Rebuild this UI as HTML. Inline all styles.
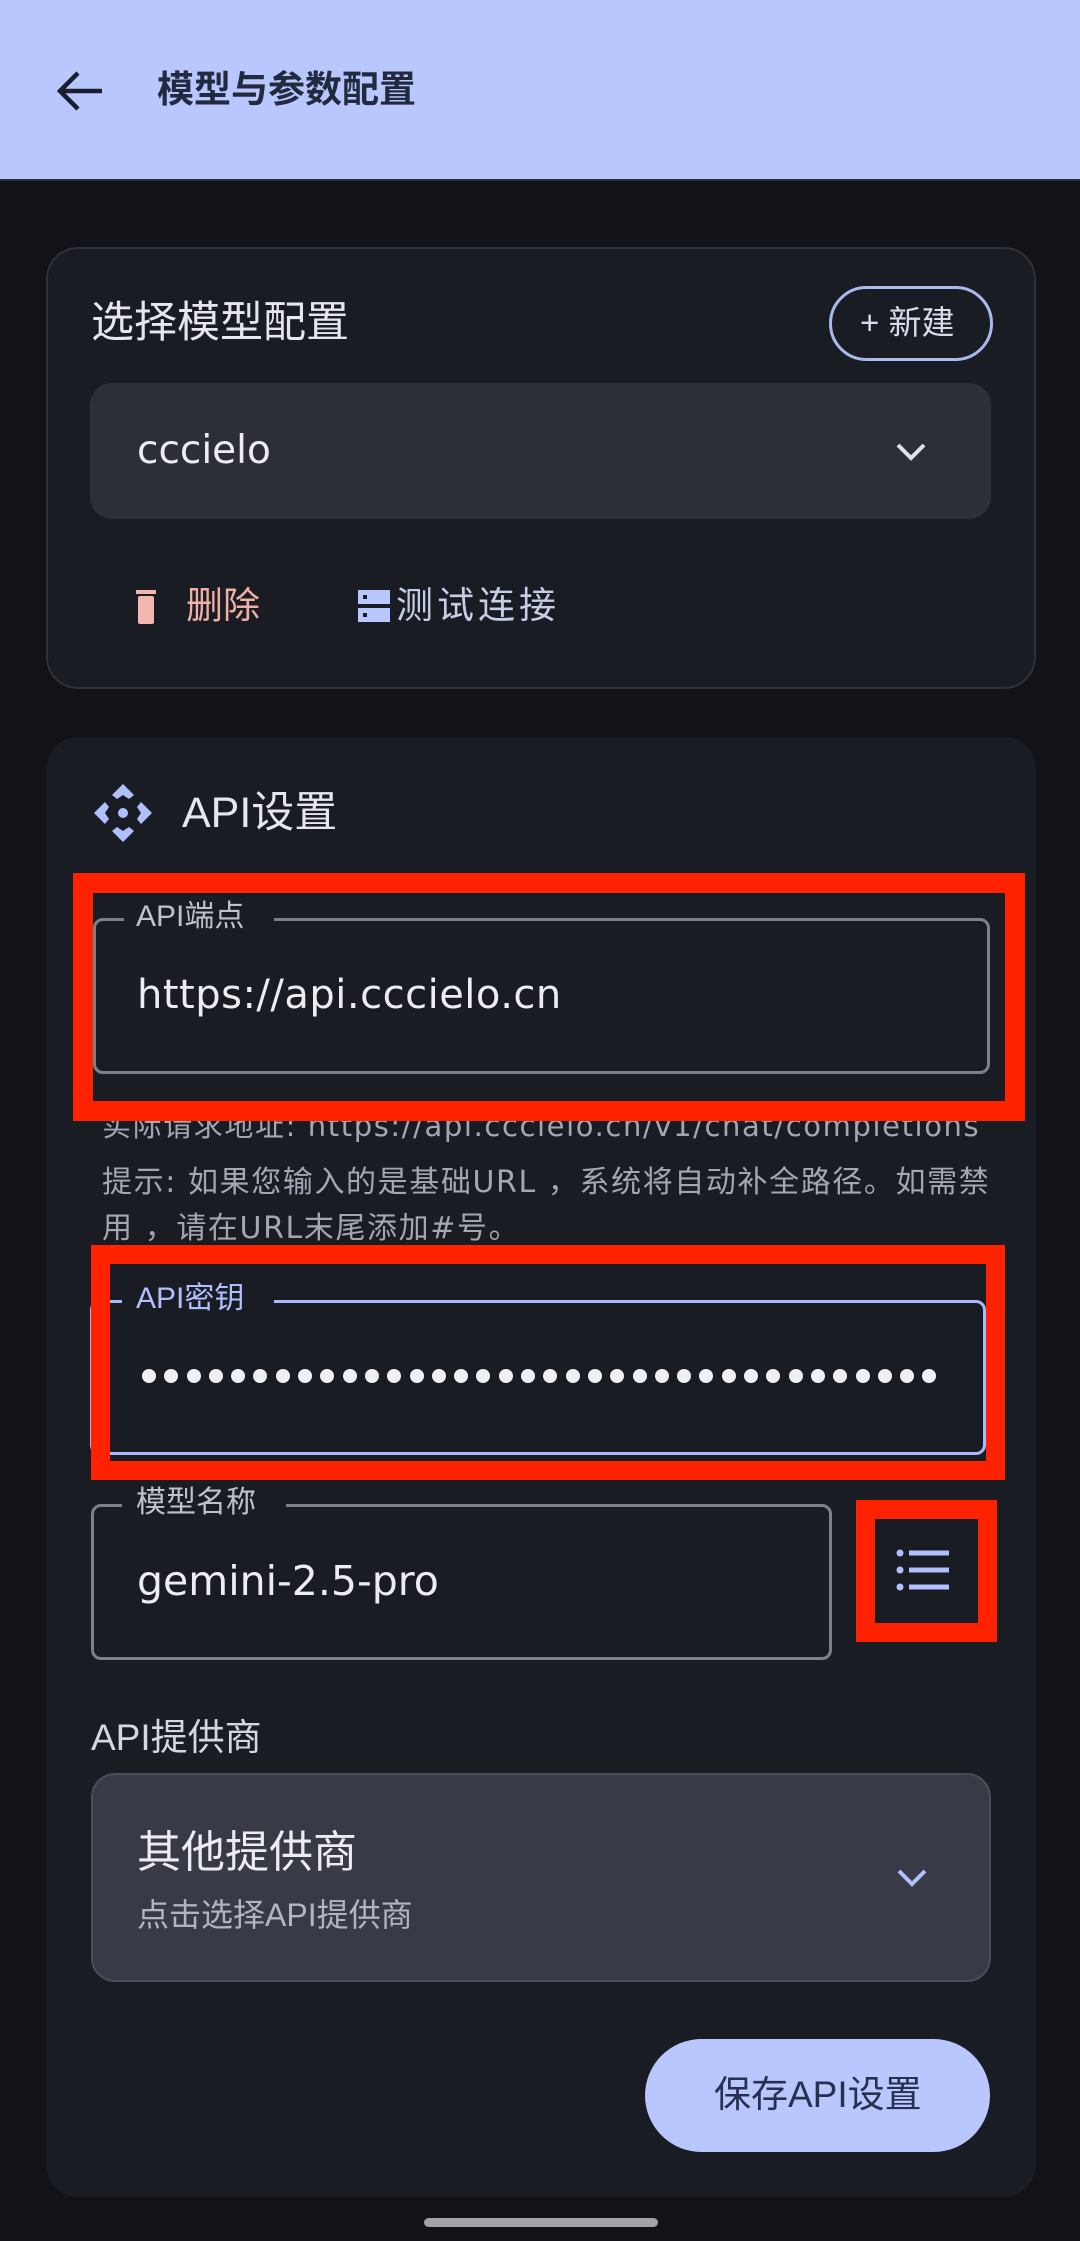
<!DOCTYPE html>
<html><head><meta charset="utf-8">
<style>
*{margin:0;padding:0;box-sizing:border-box}
body{width:1080px;height:2241px;background:#121318;position:relative;overflow:hidden;font-family:"Liberation Sans","Noto Sans CJK SC",sans-serif;color:#e3e3ea}
.a{position:absolute}
.t{position:absolute;white-space:nowrap;line-height:1}
.d{font-family:"DejaVu Sans","Noto Sans CJK SC",sans-serif}
.dots{position:absolute;left:140px;top:1367px;display:flex}
.dots i{display:block;width:22.3px;height:18px;position:relative}
.dots i:after{content:"";position:absolute;left:2px;top:2px;width:14px;height:14px;border-radius:50%;background:#f0f0f4}
</style></head><body>
<div class="a" style="left:0;top:0;width:1080px;height:179px;background:#b8c8ff"></div>
<div class="a" style="left:0;top:179px;width:1080px;height:2px;background:#2a2c33"></div>
<svg class="a" style="left:52px;top:68px" width="56" height="46" viewBox="0 0 56 46"><path d="M50 23H8M26 5L8 23l18 18" fill="none" stroke="#1a1f30" stroke-width="4.5"/></svg>
<div class="t" style="left:157px;top:71px;font-size:37px;color:#232a40;font-weight:bold">模型与参数配置</div>

<div class="a" style="left:46px;top:247px;width:990px;height:442px;background:#1a1c23;border:2px solid #2f3139;border-radius:32px"></div>
<div class="t" style="left:91px;top:302px;font-size:43px;color:#e6e6ee">选择模型配置</div>
<div class="a" style="left:829px;top:286px;width:164px;height:75px;border:3px solid #a9b9ee;border-radius:38px"></div>
<div class="t" style="left:860px;top:306px;font-size:33px;color:#d8dcea">+ 新建</div>
<div class="a" style="left:90px;top:383px;width:901px;height:136px;background:#2d2f38;border-radius:22px"></div>
<div class="t d" style="left:137px;top:431px;font-size:39px;color:#ececf2">cccielo</div>
<svg class="a" style="left:894px;top:440px" width="34" height="24" viewBox="0 0 34 24"><path d="M4 5l13 13L30 5" fill="none" stroke="#e0e0e8" stroke-width="4"/></svg>
<svg class="a" style="left:134px;top:588px" width="24" height="38" viewBox="0 0 24 38"><rect x="2" y="2" width="20" height="4" fill="#f2b8b0"/><rect x="4" y="8" width="16" height="28" rx="2" fill="#f2b8b0"/></svg>
<div class="t" style="left:186px;top:587px;font-size:37px;color:#efb0a6">删除</div>
<svg class="a" style="left:357px;top:589px" width="34" height="34" viewBox="0 0 34 34"><rect x="1" y="1" width="32" height="14" fill="#b8c8ff"/><rect x="1" y="19" width="32" height="14" fill="#b8c8ff"/><rect x="6" y="6" width="4" height="4" fill="#1a1c23"/><rect x="6" y="24" width="4" height="4" fill="#1a1c23"/></svg>
<div class="t" style="left:396px;top:587px;font-size:37px;color:#c6cee6;letter-spacing:4px">测试连接</div>

<div class="a" style="left:46px;top:737px;width:990px;height:1460px;background:#1a1c23;border-radius:32px"></div>
<svg class="a" style="left:92px;top:782px" width="62" height="62" viewBox="0 0 62 62" fill="#b0c0ff"><path d="M31 2l11 11-5 4-6-4-6 4-5-4z"/><path d="M2 31l11-11 4 5-4 6 4 6-4 5z"/><path d="M60 31l-11-11-4 5 4 6-4 6 4 5z"/><path d="M31 60l11-11-5-4-6 4-6-4-5 4z"/><circle cx="31" cy="31" r="5"/></svg>
<div class="t" style="left:182px;top:792px;font-size:43px;color:#e6e6ee">API设置</div>

<div class="a" style="left:93px;top:918px;width:897px;height:156px;border:3px solid #7e8089;border-radius:10px"></div>
<div class="a" style="left:124px;top:906px;width:150px;height:24px;background:#1a1c23"></div>
<div class="t" style="left:136px;top:902px;font-size:30px;color:#c0c2ca">API端点</div>
<div class="t d" style="left:137px;top:975px;font-size:40px;color:#ececf2;letter-spacing:0.5px">https://api.cccielo.cn</div>
<div class="t d" style="left:102px;top:1112px;font-size:29px;color:#a4a7b2;letter-spacing:1.6px">实际请求地址: https://api.cccielo.cn/v1/chat/completions</div>
<div class="t d" style="left:102px;top:1168px;font-size:30px;color:#a4a7b2;letter-spacing:1.6px">提示: 如果您输入的是基础URL ，系统将自动补全路径。如需禁</div>
<div class="t d" style="left:102px;top:1214px;font-size:30px;color:#a4a7b2;letter-spacing:1.6px">用 ，请在URL末尾添加#号。</div>

<div class="a" style="left:90px;top:1300px;width:896px;height:155px;border:3px solid #a9b9ff;border-radius:10px"></div>
<div class="a" style="left:122px;top:1288px;width:152px;height:24px;background:#1a1c23"></div>
<div class="t" style="left:136px;top:1284px;font-size:30px;color:#b0c0ff">API密钥</div>
<div class="dots"><i></i><i></i><i></i><i></i><i></i><i></i><i></i><i></i><i></i><i></i><i></i><i></i><i></i><i></i><i></i><i></i><i></i><i></i><i></i><i></i><i></i><i></i><i></i><i></i><i></i><i></i><i></i><i></i><i></i><i></i><i></i><i></i><i></i><i></i><i></i><i></i></div>

<div class="a" style="left:91px;top:1504px;width:741px;height:156px;border:3px solid #7e8089;border-radius:10px"></div>
<div class="a" style="left:122px;top:1492px;width:164px;height:24px;background:#1a1c23"></div>
<div class="t" style="left:136px;top:1488px;font-size:30px;color:#c0c2ca">模型名称</div>
<div class="t d" style="left:137px;top:1561px;font-size:41px;color:#ececf2">gemini-2.5-pro</div>
<svg class="a" style="left:896px;top:1548px" width="56" height="44" viewBox="0 0 56 44" fill="#b0c0ff"><circle cx="4" cy="5" r="3.5"/><circle cx="4" cy="22" r="3.5"/><circle cx="4" cy="39" r="3.5"/><rect x="13" y="2.5" width="40" height="5"/><rect x="13" y="19.5" width="40" height="5"/><rect x="13" y="36.5" width="40" height="5"/></svg>

<div class="t" style="left:91px;top:1719px;font-size:37px;color:#d4d6e0">API提供商</div>
<div class="a" style="left:91px;top:1773px;width:900px;height:209px;background:#383a46;border:2px solid #4a4c57;border-radius:24px"></div>
<div class="t" style="left:137px;top:1831px;font-size:44px;color:#ececf2">其他提供商</div>
<div class="t" style="left:137px;top:1899px;font-size:32px;color:#b2b5c0">点击选择API提供商</div>
<svg class="a" style="left:895px;top:1866px" width="34" height="24" viewBox="0 0 34 24"><path d="M4 5l13 13L30 5" fill="none" stroke="#b0c0ff" stroke-width="4"/></svg>

<div class="a" style="left:645px;top:2039px;width:345px;height:113px;background:#b8c8ff;border-radius:57px"></div>
<div class="t" style="left:714px;top:2076px;font-size:37px;color:#283050">保存API设置</div>

<div class="a" style="left:424px;top:2218px;width:234px;height:9px;background:#a2a2aa;border-radius:5px"></div>

<div class="a" style="left:73px;top:873px;width:952px;height:248px;border:20px solid #ff2200"></div>
<div class="a" style="left:91px;top:1245px;width:914px;height:235px;border:19px solid #ff2200"></div>
<div class="a" style="left:856px;top:1500px;width:141px;height:142px;border:19px solid #ff2200"></div>
</body></html>
